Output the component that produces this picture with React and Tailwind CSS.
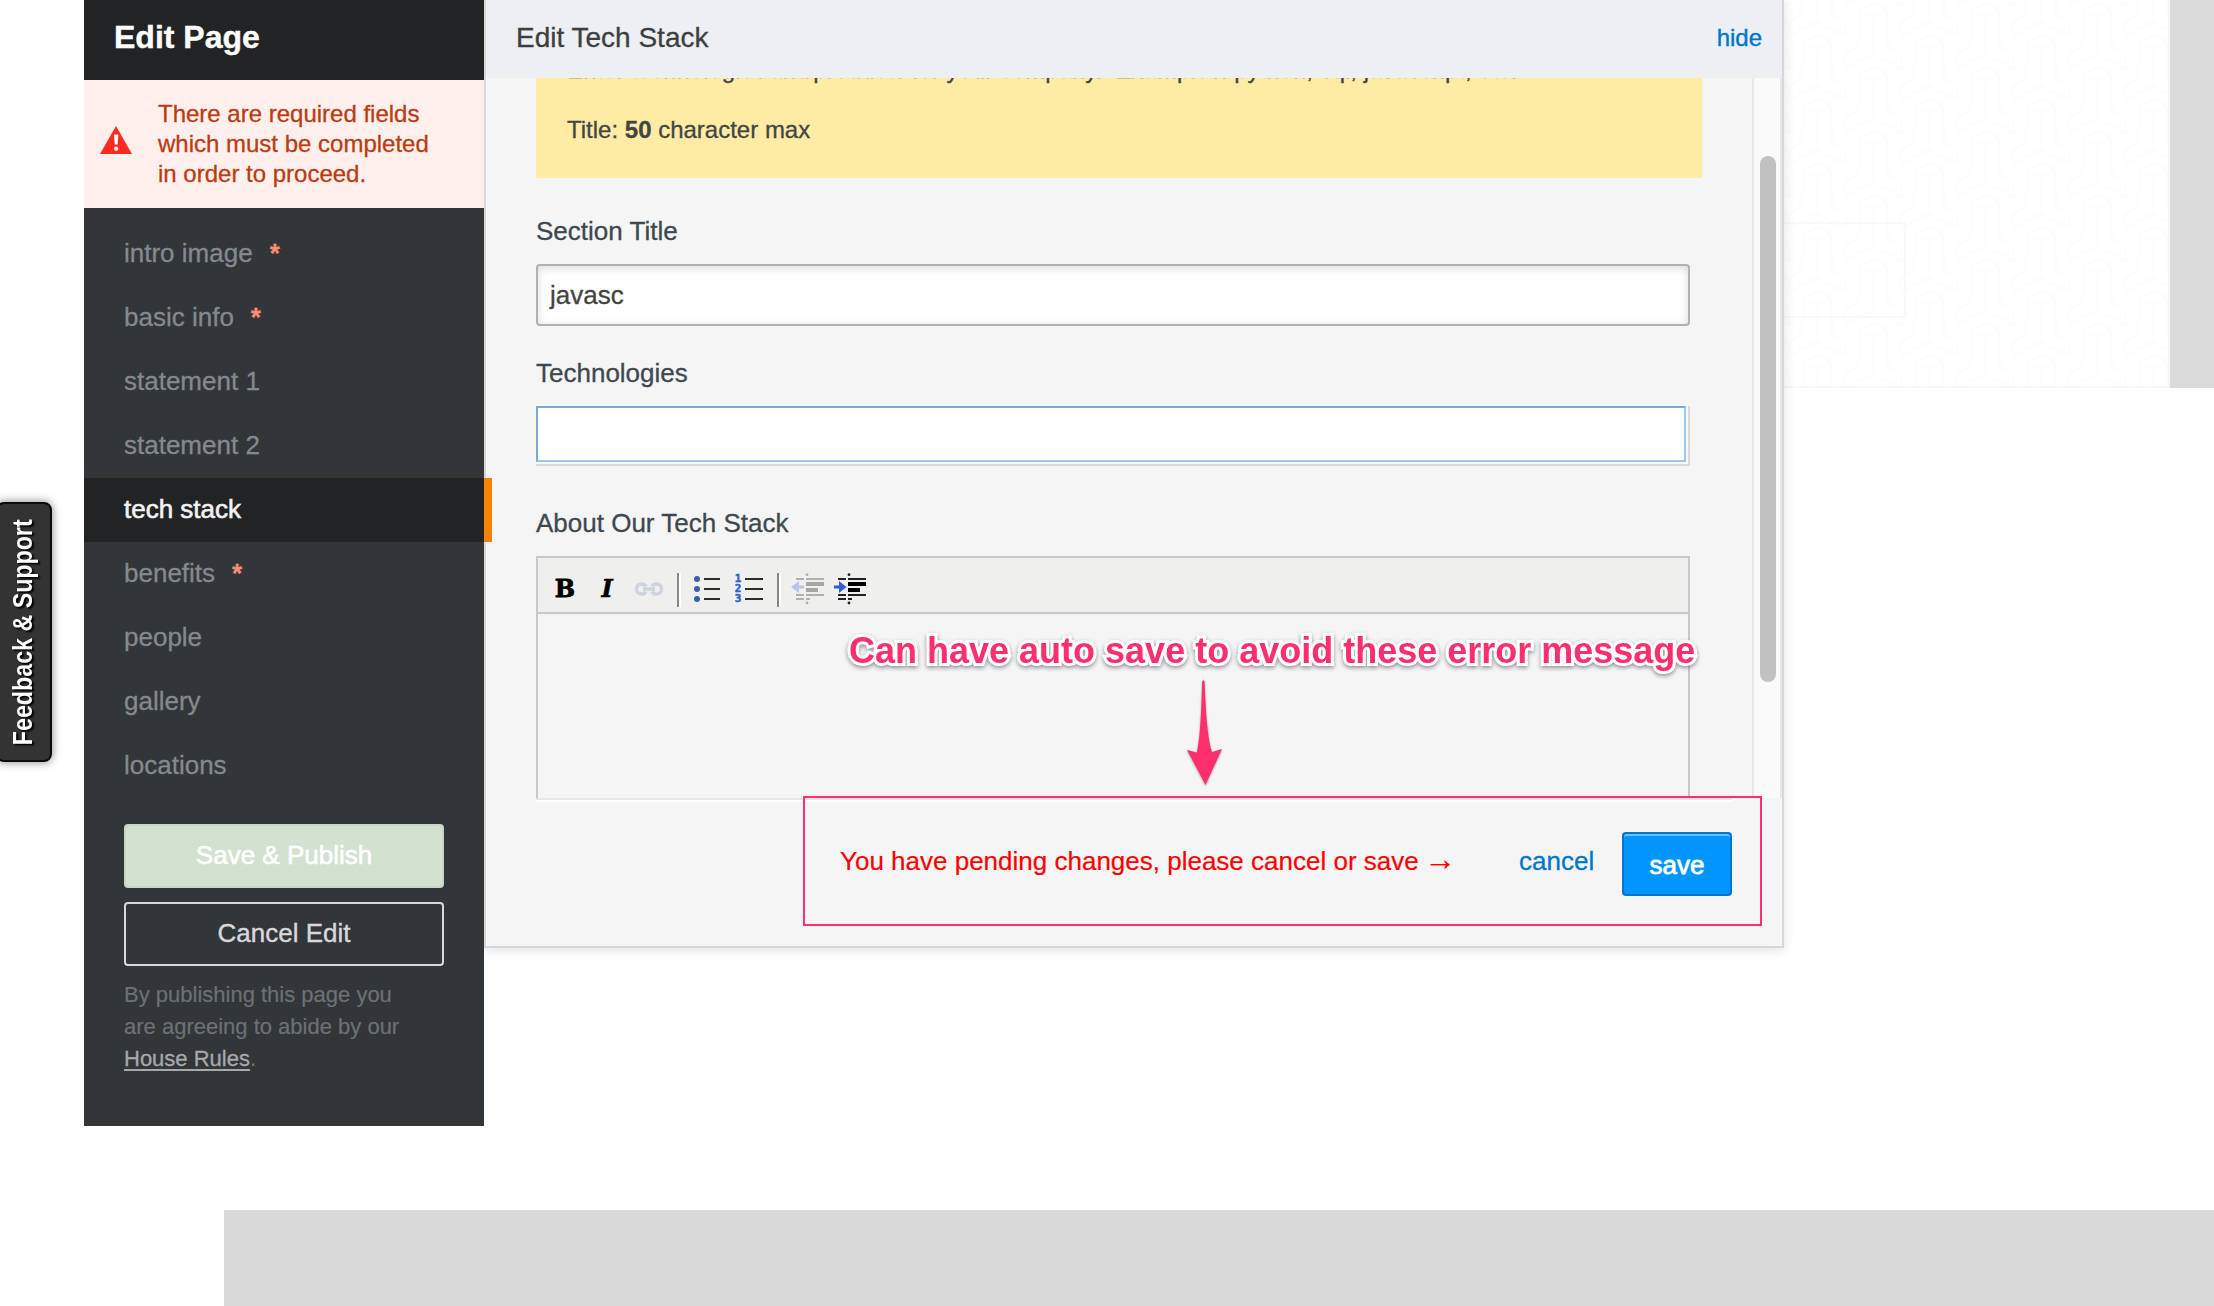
const NAV = [
  { label: "intro image", required: true },
  { label: "basic info", required: true },
  { label: "statement 1" },
  { label: "statement 2" },
  { label: "tech stack", active: true },
  { label: "benefits", required: true },
  { label: "people" },
  { label: "gallery" },
  { label: "locations" },
];

function Backdrop() {
  return (
    <div className="[grid-area:1/1] flex flex-col justify-between">
      <div className="ml-[1000px] flex h-[388px] justify-end bg-[#dbdbdb] pr-[44px]">
        <div className="relative flex-1 border-r-2 border-b-2 border-[#f6f6f6] bg-white">
          <svg className="absolute inset-0 h-full w-full" fill="none">
            <defs>
              <pattern id="weave" x="817.3" y="3" width="112" height="64" patternUnits="userSpaceOnUse">
                <g transform="scale(0.33333)" stroke="#fcfcfc" strokeWidth="6">
                  <g id="knot">
                    <path d="M168 0L125 22L168 44L211 22ZM125 22V130L83 152M211 22V130L253 152M168 44V152L83 197V152M168 152L253 197V152" />
                    <path d="M168 -192L125 -170L168 -148L211 -170ZM125 -170V-62L83 -40M211 -170V-62L253 -40M168 -148V-40L83 5V-40M168 -40L253 5V-40" />
                  </g>
                  <use href="#knot" x="168" y="96" />
                  <use href="#knot" x="-168" y="96" />
                  <use href="#knot" x="168" y="-96" />
                  <use href="#knot" x="-168" y="-96" />
                </g>
              </pattern>
            </defs>
            <rect width="100%" height="100%" fill="url(#weave)" />
            <rect x="500" y="223" width="405" height="94" stroke="#f9f9f9" strokeWidth="2" />
          </svg>
        </div>
      </div>
      <div className="ml-[224px] h-[96px] bg-[#dadada]" />
    </div>
  );
}

function Sidebar() {
  return (
    <aside className="relative z-10 h-[1126px] w-[400px] shrink-0 bg-[#323639]">
      <h1 className="h-[80px] bg-[#222325] pl-[30px] text-[32px] leading-[74px] font-bold text-white [-webkit-text-stroke:0.4px]">
        Edit Page
      </h1>
      <div className="flex h-[128px] bg-[#fff0ed] pl-[16px] text-[24px] leading-[30px] text-[#ba3c12] [-webkit-text-stroke:0.3px]">
        <svg className="mt-[46px] h-[28px] w-[32px]" viewBox="0 0 32 28">
          <path d="M16 0L32 28H0Z" fill="#ff2a20" />
          <path d="M14 8.5h4.4l-.7 10h-3z" fill="#fff" />
          <circle cx="16.2" cy="22.7" r="2.1" fill="#fff" />
        </svg>
        <p className="mt-[19px] ml-[26px] whitespace-nowrap">
          There are required fields
          <br />
          which must be completed
          <br />
          in order to proceed.
        </p>
      </div>
      <nav className="mt-[14px] text-[26px] leading-[62px] text-[#848990] [-webkit-text-stroke:0.3px]">
        {NAV.map((n) => (
          <div
            key={n.label}
            className={
              n.active
                ? "relative h-[64px] bg-[#222325] pl-[40px] text-[#f2f2f2] [-webkit-text-stroke:0.6px]"
                : "h-[64px] pl-[40px]"
            }
          >
            {n.label}
            {n.required && <span className="ml-[17px] font-bold text-[#ff8c73]">*</span>}
            {n.active && <span className="absolute top-0 left-full h-full w-[8px] bg-[#f98006]" />}
          </div>
        ))}
      </nav>
      <div className="mx-[40px] mt-[26px] flex flex-col text-center text-[26px]">
        <button className="h-[64px] rounded-[4px] border-2 border-[#c5d6c3] bg-[#d2e1d0] pb-[2px] leading-[58px] text-white [-webkit-text-stroke:0.6px]">
          Save &amp; Publish
        </button>
        <button className="mt-[14px] h-[64px] rounded-[4px] border-2 border-[#d5d8de] pb-[2px] leading-[58px] text-[#d6d8db] [-webkit-text-stroke:0.4px]">
          Cancel Edit
        </button>
      </div>
      <p className="mt-[13px] ml-[40px] text-[22px] leading-[32px] whitespace-nowrap text-[#6b7176] [-webkit-text-stroke:0.2px]">
        By publishing this page you
        <br />
        are agreeing to abide by our
        <br />
        <span className="text-[#a5a8ad] underline decoration-2 underline-offset-[3px] [-webkit-text-stroke:0.3px]">
          House Rules
        </span>
        .
      </p>
    </aside>
  );
}

function Tool({ children }) {
  return <span className="flex h-[32px] w-[42px] items-center justify-center">{children}</span>;
}

function Divider() {
  return (
    <span className="flex h-[34px] w-[16px] justify-center pl-[2px]">
      <span className="w-[2px] bg-[#8f8484]" />
      <span className="w-[2px] bg-white" />
    </span>
  );
}

function IndentIcon({ out }) {
  return (
    <svg
      className={out ? "h-[32px] w-[34px] opacity-30" : "h-[32px] w-[34px]"}
      viewBox="0 0 34 32"
      fill="none"
    >
      <path d="M6 6h8M6 22h8M6 26h8M16 6h18M16 22h18M16 26h4" stroke="#222" strokeWidth="2" />
      <path d="M16 11h18M16 17h12" stroke="#000" strokeWidth="4" />
      <circle cx="17" cy="1.7" r="1.4" fill="#222" />
      <circle cx="17" cy="30" r="1.4" fill="#222" />
      {out ? (
        <path d="M1 14L9 8V12.5H14V15.500H9V20Z" fill="#3c6bdc" />
      ) : (
        <path d="M14.500 14L7 8V12.500H2V15.500H7V20Z" fill="#2f5fd6" />
      )}
    </svg>
  );
}

function Toolbar() {
  return (
    <div className="flex h-[56px] border-b-2 border-[#c9c9c9] bg-[#efefed] pt-[15px] pl-[6px]">
      <Tool>
        <span className="font-['DejaVu_Serif',serif] text-[24px] font-bold text-black [-webkit-text-stroke:0.8px]">B</span>
      </Tool>
      <Tool>
        <span className="font-['DejaVu_Serif',serif] text-[24px] font-bold text-black italic [-webkit-text-stroke:0.5px]">I</span>
      </Tool>
      <Tool>
        <svg className="h-[14px] w-[30px]" viewBox="0 0 30 14" fill="none" stroke="#cdd4e0" strokeWidth="3.5">
          <path d="M12 4.500Q11 2 7.500 2A5 5 0 0 0 7.500 12Q11 12 12 9.500M18 4.500Q19 2 22.500 2A5 5 0 0 1 22.500 12Q19 12 18 9.500M9 7H21" />
        </svg>
      </Tool>
      <Divider />
      <Tool>
        <svg className="h-[28px] w-[26px]" viewBox="0 0 26 28">
          <g fill="#3560ae">
            <circle cx="3" cy="4" r="3" />
            <circle cx="3" cy="14" r="3" />
            <circle cx="3" cy="24" r="3" />
          </g>
          <path d="M10 4h16M10 14h16M10 24h16" stroke="#2c2c2c" strokeWidth="2" />
        </svg>
      </Tool>
      <Tool>
        <span className="flex items-center gap-[4px]">
          <span className="flex flex-col font-['DejaVu_Sans_Mono',monospace] text-[11px] leading-[10px] font-bold text-[#2f62d8] [-webkit-text-stroke:0.5px]">
            <span>1</span>
            <span>2</span>
            <span>3</span>
          </span>
          <svg className="h-[28px] w-[18px]" viewBox="0 0 18 28">
            <path d="M0 4h18M0 14h18M0 24h18" stroke="#2c2c2c" strokeWidth="2" />
          </svg>
        </span>
      </Tool>
      <Divider />
      <Tool>
        <IndentIcon out />
      </Tool>
      <Tool>
        <IndentIcon />
      </Tool>
    </div>
  );
}

function EditPanel() {
  return (
    <main className="relative h-[948px] w-[1300px] border-x-2 border-b-2 border-[#d4d7dc] bg-[#f5f5f5] shadow-[0_2px_10px_rgba(60,70,90,0.16)]">
      <header className="flex h-[78px] justify-between bg-[#eeeff2] pr-[20px] pl-[30px]">
        <h2 className="text-[28px] leading-[76px] text-[#3c3e42] [-webkit-text-stroke:0.3px]">Edit Tech Stack</h2>
        <a className="text-[24px] leading-[75px] text-[#0077cc] [-webkit-text-stroke:0.4px]">hide</a>
      </header>
      <div className="flex h-[720px] overflow-hidden">
        <div className="flex flex-1 flex-col pl-[50px] text-[26px] leading-[30px] text-[#3e4850] [-webkit-text-stroke:0.3px]">
          <div className="mt-[-56px] h-[156px] w-[1166px] shrink-0 bg-[#feeba4] pt-[30px] pl-[31px] text-[24px] leading-[36px] whitespace-nowrap text-[#444]">
            <p>
              Enter technologies<span className="[word-spacing:-3px]"> and </span>products for your
              company.&nbsp; Examples: python, sql, javascript, etc.
            </p>
            <p className="mt-[24px]">
              Title: <b>50</b> character max
            </p>
          </div>
          <label className="mt-[38px]">Section Title</label>
          <div className="mt-[18px] h-[62px] w-[1154px] shrink-0 rounded-[4px] border-2 border-[#b0b0b0] bg-white pl-[12px] leading-[58px] text-[#444] shadow-[inset_0_2px_8px_rgba(0,0,0,0.15)]">
            javasc
          </div>
          <label className="mt-[32px]">Technologies</label>
          <div className="mt-[18px] h-[60px] w-[1154px] shrink-0 border-r-2 border-b-2 border-[#dadada] bg-[#fafafa] pr-[2px] pb-[2px]">
            <div className="h-full border-2 border-[#9bc5f2] border-t-[#7aa8d8] border-l-[#7aa8d8] bg-white" />
          </div>
          <label className="mt-[42px]">About Our Tech Stack</label>
          <div className="mt-[18px] h-[260px] w-[1154px] shrink-0 border-2 border-[#c9c9c9]">
            <Toolbar />
          </div>
        </div>
        <div className="w-[30px] border-x-2 border-[#e8e8e8] bg-[#fafafa] pt-[78px] pl-[6px]">
          <div className="h-[526px] w-[16px] rounded-full bg-[#c1c1c1]" />
        </div>
      </div>
      <footer className="mr-[50px] ml-[50px] border-t-2 border-[#e6e6e6] text-[26px] leading-[30px]">
        <div className="flex items-start justify-end border-t-2 border-white pt-[30px]">
          <p className="mt-[14px] w-[679px] text-[#ff0000] [-webkit-text-stroke:0.2px]">
            You have pending changes, please cancel or save <span className="ml-[-2px] text-[32px] leading-[0]">→</span>
          </p>
          <a className="mt-[14px] w-[103px] text-[#0077cc] [-webkit-text-stroke:0.3px]">cancel</a>
          <button className="h-[64px] w-[110px] rounded-[4px] border-2 border-[#0077cc] bg-[#0095ff] pt-[3px] leading-[55px] text-white shadow-[inset_0_2px_0_#66bfff] [-webkit-text-stroke:0.8px]">
            save
          </button>
        </div>
      </footer>
    </main>
  );
}

function Annotations() {
  return (
    <>
      <div className="absolute top-[796px] left-[803px] z-20 h-[130px] w-[959px] border-2 border-[#ff2e6c]" />
      <p className="absolute top-[630px] left-[849px] z-20 text-[36px] leading-[42px] font-bold whitespace-nowrap text-[#ff2e6c] [-webkit-text-stroke:6px_white] [filter:drop-shadow(0_2px_2px_rgba(0,0,0,0.4))] [paint-order:stroke_fill] [stroke-linejoin:round]">
        Can have auto save to avoid these error message
      </p>
      <svg
        className="absolute top-[676px] left-[1180px] z-20 h-[114px] w-[50px] drop-shadow-[0_1px_1px_rgba(0,0,0,0.35)]"
        viewBox="0 0 50 114"
      >
        <path
          d="M22.200 5.500Q23.400 3 24.600 5.500C25.500 30 27 60 32 76L42 73L25.500 109L7 74L17 76.500C20.500 60 21.500 30 22.200 5.500Z"
          fill="#ff2e6c"
        />
      </svg>
    </>
  );
}

export default function App() {
  return (
    <div className="relative grid h-[1306px] w-[2214px] overflow-hidden bg-white font-['Liberation_Sans',Arial,sans-serif]">
      <Backdrop />
      <div className="relative [grid-area:1/1] flex items-start pl-[84px]">
        <Sidebar />
        <EditPanel />
      </div>
      <Annotations />
      <div className="absolute top-[502px] left-[-4px] flex h-[260px] w-[56px] items-center justify-center rounded-[8px] border-2 border-[#0c0c0c] bg-[#333] pr-[2px] shadow-[0_0_10px_rgba(0,0,0,0.5)]">
        <span className="-rotate-90 text-[27px] font-bold whitespace-nowrap text-white [text-shadow:-2px_2px_2px_#000]">
          <span className="inline-block scale-x-[0.86]">Feedback &amp; Support</span>
        </span>
      </div>
    </div>
  );
}
